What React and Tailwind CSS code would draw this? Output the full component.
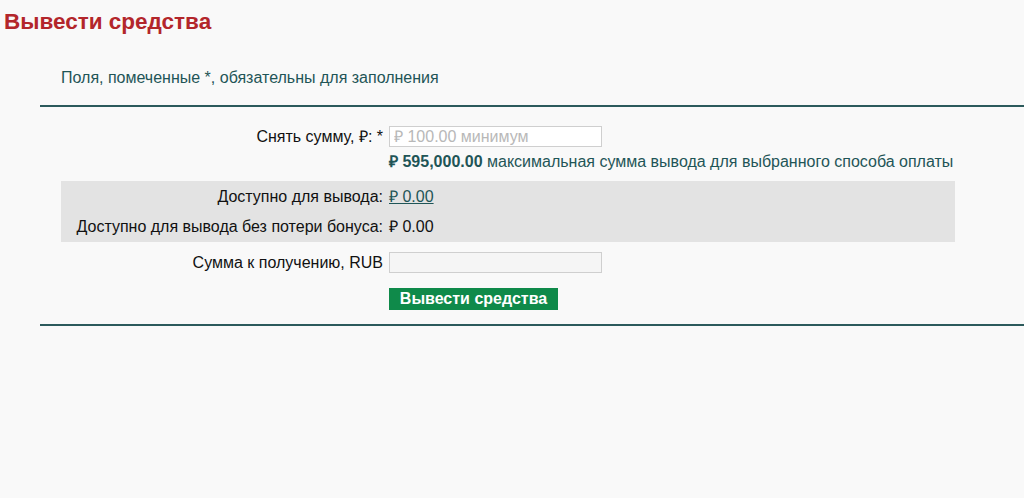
import React from 'react';

const Row = ({ label, children, className = '' }) => (
  <div className={`flex items-center ${className}`}>
    <div className="w-[328px] shrink-0 pr-[6px] text-right text-[16px] leading-[20px] text-[#111]">{label}</div>
    <div className="flex-1 leading-[20px]">{children}</div>
  </div>
);

export default function App() {
  return (
    <div className="min-h-[498px] bg-[#f9f9f9] font-['Liberation_Sans',Arial,sans-serif]">
      <h1 className="pl-[4px] pt-[9px] text-[22.5px] font-bold leading-[26px] text-[#b3262b]">Вывести средства</h1>

      <div className="ml-[40px] mt-[35px]">
        <p className="pl-[21px] text-[16px] leading-[16px] text-[#1f5557]">
          Поля, помеченные *, обязательны для заполнения
        </p>
        <div className="mt-[19px] h-[2px] bg-[#2c5a5c]" />

        <div className="ml-[21px] w-[894px] pt-[19px]">
          <Row label="Снять сумму, ₽: *">
            <input
              className="block h-[21px] w-[213px] border border-[#cfcfcf] bg-white px-[4px] text-[16px] text-[#333] outline-none placeholder:text-[#b8b8b8]"
              placeholder="₽ 100.00 минимум"
            />
          </Row>
          <Row label="" className="mt-[4px] h-[22px]">
            <span className="whitespace-nowrap text-[16px] text-[#1f5557]">
              <b>₽ 595,000.00</b> максимальная сумма вывода для выбранного способа оплаты
            </span>
          </Row>

          <div className="mt-[8px] bg-[#e3e3e3] pt-[5px] pb-[4px]">
            <Row label="Доступно для вывода:" className="h-[22px]">
              <a href="#" className="text-[16px] text-[#1f5557] underline">₽ 0.00</a>
            </Row>
            <Row label="Доступно для вывода без потери бонуса:" className="mt-[8px] h-[22px]">
              <span className="text-[16px] text-[#111]">₽ 0.00</span>
            </Row>
          </div>

          <Row label="Сумма к получению, RUB" className="mt-[10px]">
            <input className="block h-[21px] w-[213px] border border-[#cfcfcf] bg-[#f5f5f5] px-[4px] text-[16px] outline-none" />
          </Row>
          <Row label="" className="mt-[15px]">
            <button className="block h-[22px] w-[169px] bg-[#0f8a4a] text-[16px] font-bold leading-[22px] text-white">
              Вывести средства
            </button>
          </Row>
        </div>

        <div className="mt-[14px] h-[2px] bg-[#2c5a5c]" />
      </div>
    </div>
  );
}
